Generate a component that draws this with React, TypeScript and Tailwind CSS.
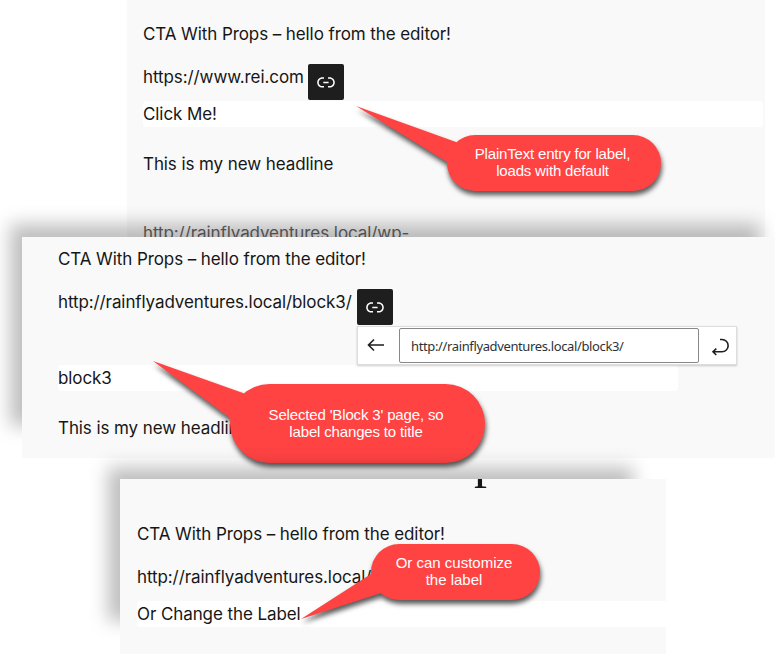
import type { ReactNode } from "react";

function LinkButton() {
  return (
    <button className="flex size-9 shrink-0 items-center justify-center rounded-[2px] bg-[#1e1e1e] text-white">
      <svg viewBox="0 0 24 24" className="size-6" fill="currentColor">
        <path d="M15.6 7.2H14v1.5h1.6c2 0 3.7 1.7 3.7 3.7s-1.7 3.7-3.7 3.7H14v1.5h1.6c2.8 0 5.2-2.3 5.2-5.2 0-2.9-2.3-5.2-5.2-5.2zM4.7 12.4c0-2 1.7-3.7 3.7-3.7H10V7.2H8.4c-2.9 0-5.2 2.3-5.2 5.2 0 2.9 2.3 5.2 5.2 5.2H10v-1.5H8.4c-2 0-3.7-1.7-3.7-3.7zm4.6.9h5.3v-1.5H9.3v1.5z" />
      </svg>
    </button>
  );
}

type CalloutProps = {
  className: string;
  width: number;
  height: number;
  radius: number;
  tail: string;
  children: ReactNode;
};

function Callout({ className, width, height, radius, tail, children }: CalloutProps) {
  return (
    <div className={`absolute flex justify-center pr-[3px] text-center ${className}`}>
      <svg
        width={width}
        height={height}
        className="absolute inset-0 overflow-visible fill-[#ff4343] drop-shadow-[1px_4px_2.5px_rgba(0,0,0,0.65)]"
      >
        <rect width={width} height={height} rx={radius} />
        <polygon points={tail} />
      </svg>
      <p className="relative font-['Liberation_Sans',Arial,sans-serif] text-[15px] leading-[17px] whitespace-nowrap text-white">
        {children}
      </p>
    </div>
  );
}

export default function App() {
  return (
    <main className="h-[654px] w-[775px] overflow-hidden bg-white font-[Inter,sans-serif] text-[17px] leading-[26px] tracking-[-0.09px] whitespace-nowrap text-[#161616]">
      <section className="relative ml-[127px] h-[237px] w-[638px]">
        <div className="h-full overflow-hidden bg-[#f9f9f9] pt-[21px] pr-0.5 pl-4">
          <p>CTA With Props – hello from the editor!</p>
          <div className="mt-[17px] flex h-[37px] items-start gap-[5px]">
            <p className="w-40">https://www.rei.com</p>
            <LinkButton />
          </div>
          <div className="h-[26px] rounded bg-white">Click Me!</div>
          <p className="mt-6">This is my new headline</p>
          <p className="mt-[43px] text-[#666]">http://rainflyadventures.local/wp-</p>
        </div>
        <Callout
          className="top-[135px] left-[320px] h-14 w-[214px] pt-[10px] tracking-[-0.18px]"
          width={214}
          height={56}
          radius={28}
          tail="-91,-29 9,7 30,25 10,35 0,27"
        >
          PlainText entry for label,
          <br />
          loads with default
        </Callout>
      </section>

      <section className="relative ml-[22px] h-[221px] w-[753px]">
        <div className="absolute top-[-13px] left-[-12px] h-[202px] w-[750px] bg-black/25 blur-[9px]" />
        <div className="relative h-full bg-[#f9f9f9] pt-[9px] pl-9">
          <p>CTA With Props – hello from the editor!</p>
          <div className="mt-[17px] flex h-[37px] items-start gap-[5px]">
            <p className="w-[294px] tracking-[-0.1px]">http://rainflyadventures.local/block3/</p>
            <LinkButton />
          </div>
          <div className="relative ml-[299px] flex h-[39px] w-[380px] items-center border border-[#ddd] bg-white shadow-[0_1px_2px_rgba(0,0,0,0.2)]">
            <div className="flex w-[41px] justify-center pr-[5px] pb-0.5">
              <svg viewBox="0 0 18 14" className="h-[14px] w-[18px] fill-none stroke-[#1e1e1e] stroke-[1.6]">
                <path d="M17 7H2M7 1.5 1.5 7 7 12.5" />
              </svg>
            </div>
            <div className="h-[35px] w-[300px] rounded-[2px] border border-[#888] pl-[11px] font-['Noto_Sans',sans-serif] text-[13px] leading-[34px] tracking-[-0.37px] text-[#2c3338]">
              http://rainflyadventures.local/block3/
            </div>
            <div className="flex flex-1 justify-center pt-0.5 pl-1">
              <svg viewBox="0 0 18 18" className="size-[18px] fill-none stroke-[#1e1e1e] stroke-[1.6]">
                <path d="M9 1.5h2a5.7 5.7 0 0 1 0 12.3H2M5.3 10.6 2 13.8l3.3 3.2" />
              </svg>
            </div>
          </div>
          <div className="h-[26px] w-[620px] rounded bg-white">block3</div>
          <p className="mt-6">This is my new headline</p>
        </div>
        <Callout
          className="top-[147px] left-[208px] h-[79px] w-[255px] pt-[22px] tracking-[-0.16px]"
          width={255}
          height={79}
          radius={39.5}
          tail="-77,-23 13,9 40,30 10,45 0,34"
        >
          Selected 'Block 3' page, so
          <br />
          label changes to title
        </Callout>
      </section>

      <section className="relative mt-[21px] ml-[120px] h-[175px] w-[546px]">
        <div className="absolute top-[-12px] left-[-12px] h-[154px] w-[525px] bg-black/25 blur-[9px]" />
        <div className="relative h-full bg-[#f9f9f9] pl-[17px]">
          <div className="flex h-[42px] items-start overflow-hidden pl-[337px]">
            <span className="-mt-[43px] font-['Liberation_Serif',serif] text-[52px] leading-[48px]">p</span>
          </div>
          <p>CTA With Props – hello from the editor!</p>
          <p className="mt-[17px]">http://rainflyadventures.local/</p>
          <div className="mt-[11px] h-[26px] rounded-l bg-white">Or Change the Label</div>
        </div>
        <Callout
          className="top-[65px] left-[251px] h-14 w-[169px] pt-[10px] tracking-normal"
          width={169}
          height={56}
          radius={28}
          tail="-70,75 0,30 25,20 30,40 10,49"
        >
          Or can customize
          <br />
          the label
        </Callout>
      </section>
    </main>
  );
}
